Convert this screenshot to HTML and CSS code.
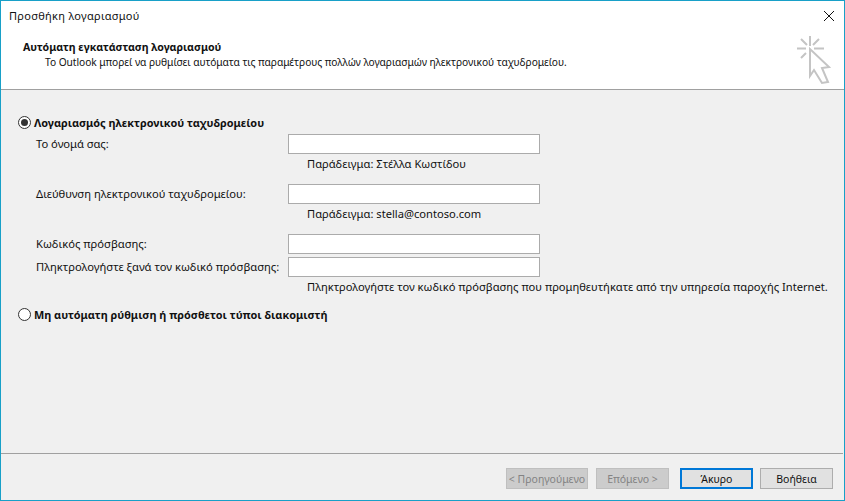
FILE: index.html
```html
<!DOCTYPE html>
<html lang="el">
<head>
<meta charset="utf-8">
<title>Προσθήκη λογαριασμού</title>
<link rel="stylesheet" href="styles.css">
</head>
<body>
<div class="window">
  <div class="titlebar">
    <span class="title">Προσθήκη λογαριασμού</span>
    <svg class="close" width="12" height="12" viewBox="0 0 12 12"><path d="M1 1L11 11M11 1L1 11" stroke="#111" stroke-width="1" fill="none"/></svg>
  </div>
  <header class="header">
    <div class="header-text">
      <h1 class="heading">Αυτόματη εγκατάσταση λογαριασμού</h1>
      <p class="subheading">Το Outlook μπορεί να ρυθμίσει αυτόματα τις παραμέτρους πολλών λογαριασμών ηλεκτρονικού ταχυδρομείου.</p>
    </div>
    <svg class="wizard-icon" width="36" height="50" viewBox="0 0 36 50">
      <g stroke="#c4c4c4" stroke-width="2" fill="none">
        <path d="M14 1V11M1 13.5H10M18 13.5H28M5 4L11 10M23 4L17 10M5 23L10 18"/>
        <path d="M14 14L14 41L18 35L26 48L32 47L26 33L33 32Z" fill="#fff"/>
      </g>
    </svg>
  </header>
  <main class="main">
    <label class="radio-row"><span class="radio checked"></span>Λογαριασμός ηλεκτρονικού ταχυδρομείου</label>
    <div class="form">
      <div class="row"><span class="label">Το όνομά σας:</span><span class="input"></span></div>
      <div class="hint hint-gap">Παράδειγμα: Στέλλα Κωστίδου</div>
      <div class="row"><span class="label">Διεύθυνση ηλεκτρονικού ταχυδρομείου:</span><span class="input"></span></div>
      <div class="hint hint-gap">Παράδειγμα: stella@contoso.com</div>
      <div class="row"><span class="label">Κωδικός πρόσβασης:</span><span class="input"></span></div>
      <div class="row row-tight"><span class="label">Πληκτρολογήστε ξανά τον κωδικό πρόσβασης:</span><span class="input"></span></div>
      <div class="hint">Πληκτρολογήστε τον κωδικό πρόσβασης που προμηθευτήκατε από την υπηρεσία παροχής Internet.</div>
    </div>
    <label class="radio-row radio-second"><span class="radio"></span>Μη αυτόματη ρύθμιση ή πρόσθετοι τύποι διακομιστή</label>
  </main>
  <footer class="footer">
    <button class="btn btn-back" disabled>&lt; Προηγούμενο</button>
    <button class="btn btn-next" disabled>Επόμενο &gt;</button>
    <button class="btn btn-primary">Άκυρο</button>
    <button class="btn btn-help">Βοήθεια</button>
  </footer>
</div>
</body>
</html>
```
FILE: styles.css
```css
* { box-sizing: border-box; }
html, body { margin: 0; padding: 0; }
body { width: 845px; height: 501px; overflow: hidden; font-family: "Noto Sans", "Open Sans", sans-serif; font-size: 11.2px; color: #111; }
.window { width: 845px; height: 501px; border: 1px solid #18a0c8; display: flex; flex-direction: column; background: #f0f0f0; }
.titlebar { height: 29px; background: #fff; display: flex; align-items: center; justify-content: space-between; padding: 0 9px 0 8px; flex: none; }
.title { font-size: 11px; letter-spacing: 0.3px; }
.header { height: 60px; background: #fff; border-bottom: 1px solid #a0a0a0; display: flex; justify-content: space-between; padding: 10px 12px 0 22px; flex: none; }
.heading { margin: 0; font-size: 10.6px; font-weight: 700; line-height: 15px; }
.subheading { margin: 0 0 0 22px; font-size: 10.2px; letter-spacing: -0.04px; line-height: 15px; }
.wizard-icon { margin-top: -5px; }
.main { flex: 1; padding-top: 24px; padding-left: 17px; }
.radio-row { display: flex; align-items: center; gap: 3px; font-size: 10.9px; font-weight: 700; height: 16px; }
.radio { width: 13px; height: 13px; border: 1px solid #333; border-radius: 50%; background: #fff; display: flex; align-items: center; justify-content: center; }
.radio.checked::after { content: ""; width: 7px; height: 7px; border-radius: 50%; background: #333; }
.form { padding-left: 18px; padding-top: 4px; }
.row { display: flex; height: 20px; align-items: center; }
.row-tight { margin-top: 3px; }
.label { width: 252px; padding-bottom: 1px; white-space: nowrap; }
.input { width: 252px; height: 20px; background: #fff; border: 1px solid #ababab; }
.hint { padding-left: 271px; height: 20px; font-size: 11.15px; line-height: 20px; white-space: nowrap; }
.hint-gap { height: 30px; }
.radio-second { margin-top: 9px; }
.footer { height: 47px; margin-right: 1px; border-top: 1px solid #a0a0a0; flex: none; display: flex; justify-content: flex-end; padding: 14px 10px 0 0; }
.btn { height: 21px; width: 73px; font: inherit; font-size: 10.5px; background: #e1e1e1; border: 1px solid #adadad; color: #111; padding: 0; margin-left: 8px; }
.btn:disabled { background: #ccc; border-color: #bfbfbf; color: #838383; }
.btn-back { width: 82px; }
.btn-primary { border: 2px solid #0078d7; margin-left: 11px; }
.btn-help { margin-left: 7px; }
```
